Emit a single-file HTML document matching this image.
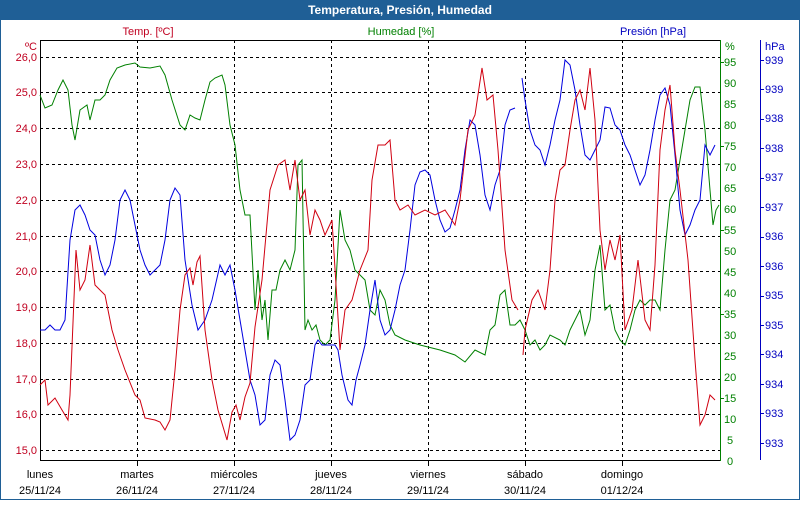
<!DOCTYPE html>
<html><head><meta charset="utf-8"><style>
html,body{margin:0;padding:0;background:#fff}
body{width:800px;height:500px;overflow:hidden;font-family:"Liberation Sans",sans-serif}
</style></head><body>
<svg width="800" height="500" xmlns="http://www.w3.org/2000/svg" font-family="Liberation Sans, sans-serif" font-size="11">
<rect x="0" y="0" width="800" height="500" fill="#fff"/>
<rect x="0.5" y="0.5" width="799" height="499" fill="none" stroke="#1f5f96" stroke-width="1"/>
<rect x="0" y="0" width="800" height="20" fill="#1f5f96"/>
<text x="400" y="14" text-anchor="middle" fill="#fff" font-weight="bold" font-size="12">Temperatura, Presión, Humedad</text>
<text x="148" y="35" text-anchor="middle" fill="#c00020">Temp. [ºC]</text>
<text x="401" y="35" text-anchor="middle" fill="#008000">Humedad [%]</text>
<text x="653" y="35" text-anchor="middle" fill="#0000c0">Presión [hPa]</text>
<g stroke="#000" stroke-dasharray="3,3" stroke-width="1">
<line x1="40" x2="720" y1="57.5" y2="57.5"/><line x1="40" x2="720" y1="92.5" y2="92.5"/><line x1="40" x2="720" y1="128.5" y2="128.5"/><line x1="40" x2="720" y1="164.5" y2="164.5"/><line x1="40" x2="720" y1="200.5" y2="200.5"/><line x1="40" x2="720" y1="236.5" y2="236.5"/><line x1="40" x2="720" y1="271.5" y2="271.5"/><line x1="40" x2="720" y1="307.5" y2="307.5"/><line x1="40" x2="720" y1="343.5" y2="343.5"/><line x1="40" x2="720" y1="379.5" y2="379.5"/><line x1="40" x2="720" y1="414.5" y2="414.5"/><line x1="40" x2="720" y1="450.5" y2="450.5"/>
<line y1="40" y2="460" x1="137.5" x2="137.5"/><line y1="40" y2="460" x1="234.5" x2="234.5"/><line y1="40" y2="460" x1="331.5" x2="331.5"/><line y1="40" y2="460" x1="428.5" x2="428.5"/><line y1="40" y2="460" x1="525.5" x2="525.5"/><line y1="40" y2="460" x1="622.5" x2="622.5"/>
</g>
<g stroke="#000"><line x1="40.5" y1="40" x2="40.5" y2="461"/><line x1="40" y1="40.5" x2="720" y2="40.5"/><line x1="40" y1="460.5" x2="720" y2="460.5"/>
<line x1="137.5" y1="460" x2="137.5" y2="466"/><line x1="234.5" y1="460" x2="234.5" y2="466"/><line x1="331.5" y1="460" x2="331.5" y2="466"/><line x1="428.5" y1="460" x2="428.5" y2="466"/><line x1="525.5" y1="460" x2="525.5" y2="466"/><line x1="622.5" y1="460" x2="622.5" y2="466"/></g>
<line x1="720.5" y1="40" x2="720.5" y2="461" stroke="#008000"/>
<line x1="760.5" y1="40" x2="760.5" y2="460" stroke="#0000c0"/>
<g fill="#c00020" text-anchor="end"><text x="37" y="50">ºC</text>
<text x="37" y="61">26,0</text><text x="37" y="96">25,0</text><text x="37" y="132">24,0</text><text x="37" y="168">23,0</text><text x="37" y="204">22,0</text><text x="37" y="240">21,0</text><text x="37" y="275">20,0</text><text x="37" y="311">19,0</text><text x="37" y="347">18,0</text><text x="37" y="383">17,0</text><text x="37" y="418">16,0</text><text x="37" y="454">15,0</text></g>
<g fill="#008000"><text x="725" y="50">%</text>
<text x="724" y="66">95</text><text x="724" y="87">90</text><text x="724" y="108">85</text><text x="724" y="129">80</text><text x="724" y="150">75</text><text x="724" y="171">70</text><text x="724" y="192">65</text><text x="724" y="213">60</text><text x="724" y="234">55</text><text x="724" y="255">50</text><text x="724" y="276">45</text><text x="724" y="297">40</text><text x="724" y="318">35</text><text x="724" y="339">30</text><text x="724" y="360">25</text><text x="724" y="381">20</text><text x="724" y="402">15</text><text x="724" y="423">10</text><text x="727" y="444">5</text><text x="727" y="465">0</text></g>
<g stroke="#008000"><line x1="720" x2="724" y1="62.5" y2="62.5"/><line x1="720" x2="724" y1="146.5" y2="146.5"/><line x1="720" x2="724" y1="230.5" y2="230.5"/><line x1="720" x2="724" y1="314.5" y2="314.5"/><line x1="720" x2="724" y1="398.5" y2="398.5"/></g>
<g fill="#0000c0"><text x="765" y="50">hPa</text>
<text x="765" y="64">939</text><text x="765" y="93">939</text><text x="765" y="122">938</text><text x="765" y="152">938</text><text x="765" y="181">937</text><text x="765" y="211">937</text><text x="765" y="240">936</text><text x="765" y="270">936</text><text x="765" y="299">935</text><text x="765" y="329">935</text><text x="765" y="358">934</text><text x="765" y="388">934</text><text x="765" y="417">933</text><text x="765" y="447">933</text></g>
<g stroke="#0000c0"><line x1="760" x2="764" y1="60.5" y2="60.5"/><line x1="760" x2="764" y1="89.5" y2="89.5"/><line x1="760" x2="764" y1="119.5" y2="119.5"/><line x1="760" x2="764" y1="148.5" y2="148.5"/><line x1="760" x2="764" y1="178.5" y2="178.5"/><line x1="760" x2="764" y1="207.5" y2="207.5"/><line x1="760" x2="764" y1="237.5" y2="237.5"/><line x1="760" x2="764" y1="266.5" y2="266.5"/><line x1="760" x2="764" y1="296.5" y2="296.5"/><line x1="760" x2="764" y1="325.5" y2="325.5"/><line x1="760" x2="764" y1="354.5" y2="354.5"/><line x1="760" x2="764" y1="384.5" y2="384.5"/><line x1="760" x2="764" y1="413.5" y2="413.5"/><line x1="760" x2="764" y1="443.5" y2="443.5"/></g>
<g fill="#000" text-anchor="middle"><text x="40" y="478">lunes</text><text x="40" y="494">25/11/24</text>
<text x="137" y="478">martes</text><text x="137" y="494">26/11/24</text>
<text x="234" y="478">miércoles</text><text x="234" y="494">27/11/24</text>
<text x="331" y="478">jueves</text><text x="331" y="494">28/11/24</text>
<text x="428" y="478">viernes</text><text x="428" y="494">29/11/24</text>
<text x="525" y="478">sábado</text><text x="525" y="494">30/11/24</text>
<text x="622" y="478">domingo</text><text x="622" y="494">01/12/24</text></g>
<g fill="none" stroke-width="1">
<polyline stroke="#008000" points="40,95 45,108 52,105 58,90 63,80 68,90 72,125 75,140 80,110 87,105 90,120 95,100 100,100 105,95 110,80 117,68 125,65 135,63 140,67 150,68 160,66 165,75 172,100 180,125 185,130 190,115 195,118 200,120 205,100 210,82 215,78 222,75 225,85 230,125 235,145 240,190 245,215 250,215 255,310 258,270 262,320 265,300 268,340 272,290 276,290 280,270 285,260 290,270 295,250 298,165 302,160 305,330 308,320 312,330 316,325 320,340 325,345 330,340 335,300 340,210 345,240 350,250 355,270 360,275 365,280 370,310 375,315 380,290 385,300 390,325 395,335 405,340 420,345 440,350 455,355 465,362 475,350 485,355 490,330 495,325 500,295 505,290 510,325 515,325 520,320 525,330 530,345 535,340 540,350 545,345 550,335 560,340 565,345 570,330 575,320 580,310 585,335 590,320 595,270 600,245 605,310 610,305 615,330 620,340 625,345 630,330 635,310 640,300 645,305 650,300 655,300 660,310 665,250 670,200 675,190 680,160 685,130 690,100 695,87 700,87 705,130 710,190 713,225 716,210 719,205"/>
<polyline stroke="#0000e0" points="40,330 45,330 50,325 55,330 60,330 65,320 70,240 75,210 80,205 85,215 90,230 95,235 100,260 105,275 110,265 115,240 120,200 125,190 130,200 135,225 140,250 145,265 150,275 155,270 160,265 165,240 170,200 175,188 180,195 185,260 192,305 198,330 205,320 212,300 220,265 225,275 230,265 235,290 240,320 245,350 250,380 255,395 260,425 265,420 270,375 275,360 280,365 285,400 290,440 295,435 300,420 305,385 310,380 315,345 318,340 322,345 335,345 338,350 342,375 348,400 352,405 356,380 360,365 365,345 370,310 375,280 380,320 385,335 390,330 395,310 400,285 405,270 410,230 415,185 420,172 425,170 430,175 435,200 440,220 445,232 450,228 455,210 460,190 465,150 470,120 475,125 480,155 485,195 490,210 495,185 500,170 505,125 510,110 515,108"/>
<polyline stroke="#0000e0" points="522,78 525,100 530,130 535,145 540,150 545,165 550,145 555,120 560,100 565,60 570,65 575,90 580,125 585,155 590,160 595,150 600,140 605,107 610,108 615,125 620,130 625,145 630,155 635,170 640,185 645,175 650,150 655,120 660,95 665,88 670,105 675,155 680,210 685,235 690,225 695,210 700,200 705,145 710,155 715,145"/>
<polyline stroke="#d00010" points="40,385 45,380 48,405 55,398 62,410 68,420 70,395 76,250 80,290 85,280 90,245 95,285 105,295 112,330 118,350 125,370 135,395 140,400 145,418 155,420 160,422 165,430 170,420 175,370 180,310 185,275 190,268 193,285 197,262 200,256 205,330 212,380 218,410 227,440 232,412 236,405 240,420 245,397 250,383 255,327 262,280 270,190 278,165 285,160 290,190 295,160 300,200 305,190 310,235 315,210 320,220 325,235 332,220 340,350 345,310 352,300 360,270 368,250 372,180 378,145 385,145 390,140 395,200 400,210 408,205 415,215 425,210 435,215 445,210 455,225 460,200 468,130 475,115 482,68 487,100 493,95 498,150 505,250 512,300 518,310"/>
<polyline stroke="#d00010" points="523,355 525,330 532,300 538,290 545,310 550,270 555,200 560,170 565,165 570,130 575,100 580,90 585,110 590,68 595,120 600,230 605,270 610,240 615,260 620,235 625,330 632,310 638,260 645,320 650,330 655,265 660,150 665,110 670,85 675,150 680,190 688,260 695,360 700,425 705,415 710,395 715,400"/>
</g>
</svg>
</body></html>
